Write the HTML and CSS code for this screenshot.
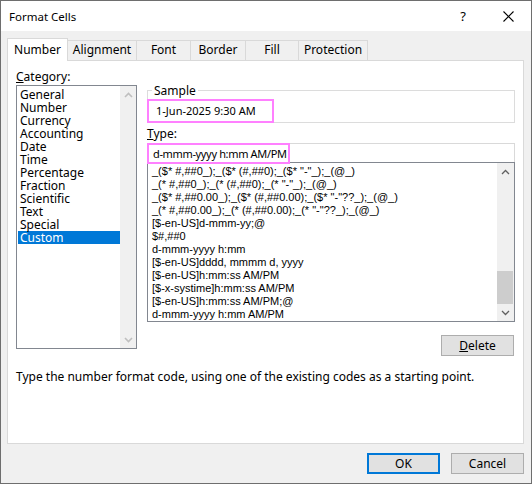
FILE: index.html
```html
<!DOCTYPE html>
<html>
<head>
<meta charset="utf-8">
<link rel="stylesheet" href="styles.css">
</head>
<body>
<div class="window">
  <div class="titlebar">
    <span class="title">Format Cells</span>
    <span class="help">?</span>
    <span class="close"><svg width="11" height="11" viewBox="0 0 11 11"><path d="M0.5 0.5L10.5 10.5M10.5 0.5L0.5 10.5" stroke="#000" stroke-width="1.1" fill="none"/></svg></span>
  </div>
  <div class="body">
    <div class="tabs">
      <div class="tab active t-number">Number</div>
      <div class="tab t-align">Alignment</div>
      <div class="tab t-font">Font</div>
      <div class="tab t-border">Border</div>
      <div class="tab t-fill">Fill</div>
      <div class="tab t-prot">Protection</div>
    </div>
    <div class="panel">
      <div class="cols">
        <div class="left">
          <div class="label cat-label"><u>C</u>ategory:</div>
          <div class="catlist">
            <div class="catitems">
              <div class="cat">General</div>
              <div class="cat">Number</div>
              <div class="cat">Currency</div>
              <div class="cat">Accounting</div>
              <div class="cat">Date</div>
              <div class="cat">Time</div>
              <div class="cat">Percentage</div>
              <div class="cat">Fraction</div>
              <div class="cat">Scientific</div>
              <div class="cat">Text</div>
              <div class="cat">Special</div>
              <div class="cat selected">Custom</div>
            </div>
            <div class="vscroll disabled">
              <div class="arrow"><svg width="9" height="6" viewBox="0 0 9 6"><path d="M1 5L4.5 1.5L8 5" stroke="currentColor" stroke-width="1.6" fill="none"/></svg></div>
              <div class="track"></div>
              <div class="arrow"><svg width="9" height="6" viewBox="0 0 9 6"><path d="M1 1L4.5 4.5L8 1" stroke="currentColor" stroke-width="1.6" fill="none"/></svg></div>
            </div>
          </div>
        </div>
        <div class="right">
          <fieldset class="sample">
            <legend>Sample</legend>
            <div class="hl sample-val">1-Jun-2025 9:30 AM</div>
          </fieldset>
          <div class="label type-label"><u>T</u>ype:</div>
          <div class="typeinput"><span class="hl type-val">d-mmm-yyyy h:mm AM/PM</span></div>
          <div class="fmtlist">
            <div class="fmtitems">
              <div class="fmt">_($* #,##0_);_($* (#,##0);_($* "-"_);_(@_)</div>
              <div class="fmt">_(* #,##0_);_(* (#,##0);_(* "-"_);_(@_)</div>
              <div class="fmt">_($* #,##0.00_);_($* (#,##0.00);_($* "-"??_);_(@_)</div>
              <div class="fmt">_(* #,##0.00_);_(* (#,##0.00);_(* "-"??_);_(@_)</div>
              <div class="fmt">[$-en-US]d-mmm-yy;@</div>
              <div class="fmt">$#,##0</div>
              <div class="fmt">d-mmm-yyyy h:mm</div>
              <div class="fmt">[$-en-US]dddd, mmmm d, yyyy</div>
              <div class="fmt">[$-en-US]h:mm:ss AM/PM</div>
              <div class="fmt">[$-x-systime]h:mm:ss AM/PM</div>
              <div class="fmt">[$-en-US]h:mm:ss AM/PM;@</div>
              <div class="fmt">d-mmm-yyyy h:mm AM/PM</div>
            </div>
            <div class="vscroll active-sb">
              <div class="arrow"><svg width="9" height="6" viewBox="0 0 9 6"><path d="M1 5L4.5 1.5L8 5" stroke="currentColor" stroke-width="1.3" fill="none"/></svg></div>
              <div class="track"><div class="thumb"></div></div>
              <div class="arrow"><svg width="9" height="6" viewBox="0 0 9 6"><path d="M1 1L4.5 4.5L8 1" stroke="currentColor" stroke-width="1.3" fill="none"/></svg></div>
            </div>
          </div>
          <div class="delrow"><button class="btn"><u>D</u>elete</button></div>
        </div>
      </div>
      <p class="hint">Type the number format code, using one of the existing codes as a starting point.</p>
    </div>
    <div class="footer">
      <button class="btn ok">OK</button>
      <button class="btn">Cancel</button>
    </div>
  </div>
</div>
</body>
</html>
```
FILE: styles.css
```css
* { box-sizing: border-box; }
html, body { margin: 0; padding: 0; }
body {
  width: 532px; height: 484px; overflow: hidden;
  font-family: "Noto Sans", "Open Sans", sans-serif;
  font-size: 12px; color: #000;
}
.window {
  width: 532px; height: 484px;
  border: 1px solid #6e6e6e;
  background: #f0f0f0;
  display: flex; flex-direction: column;
}
.titlebar {
  height: 30px; background: #fff;
  display: flex; align-items: center;
  padding-left: 8px;
}
.title { flex: 1; font-size: 11.5px; }
.help { width: 20px; text-align: center; margin-right: 30px; font-size: 13px; }
.close { width: 11px; margin-right: 17px; display: flex; align-items: center; }
.body { padding: 7px 7px 0 6px; display: flex; flex-direction: column; }
.tabs { display: flex; align-items: flex-end; height: 22px; }
.tab {
  height: 20px; line-height: 18px;
  border: 1px solid #d9d9d9; border-bottom: none;
  background: #f0f0f0;
  padding: 0; margin-left: -1px;
  text-align: center;
}
.tab.active {
  height: 23px; margin-bottom: -1px; margin-left: 0;
  background: #fff; position: relative; z-index: 1;
  line-height: 22px;
}
.t-number { width: 61px; }
.t-align { width: 70px; }
.t-font { width: 55px; }
.t-border { width: 56px; }
.t-fill { width: 54px; }
.t-prot { width: 70px; }
.panel {
  height: 384px;
  background: #fff;
  border: 1px solid #d9d9d9;
  padding: 7px 7px 0 8px;
}
.cols { display: flex; gap: 10px; }
.left { width: 121px; }
.right { width: 368px; display: flex; flex-direction: column; }
.label { line-height: 17px; height: 17px; }
.catlist {
  height: 264px;
  border: 1px solid #828790;
  display: flex;
  padding: 1px 0 1px 1px;
}
.catitems { flex: 1; padding-top: 1px; }
.cat { height: 13px; line-height: 13px; padding-left: 2px; }
.cat.selected { background: #0078d7; color: #fff; }
.vscroll {
  width: 16px; background: #f0f0f0;
  display: flex; flex-direction: column;
}
.vscroll .arrow { height: 17px; display: flex; align-items: center; justify-content: center; }
.vscroll .track { flex: 1; display: flex; flex-direction: column; justify-content: flex-end; }
.vscroll.disabled { color: #bfbfbf; margin: -1px 0; }
.vscroll.active-sb { color: #606060; width: 17px; }
.thumb { height: 33px; background: #cdcdcd; margin: 0 1px 0 0; }
.sample {
  margin: 15px 0 0 0; padding: 0;
  border: 1px solid #dcdcdc;
  min-width: 0;
}
.sample legend { padding: 0 2px; margin-left: 4px; line-height: 15px; }
.hl { border: 2px solid #ff80ff; display: inline-block; }
.sample-val {
  margin: 1px 0 -1px -1px;
  height: 24px; line-height: 20px;
  padding: 0 0 0 7px; width: 127px;
  font-size: 11px;
}
.type-label { margin-top: 3px; line-height: 15px; height: 15px; margin-bottom: 2px; }
.typeinput {
  height: 19px;
  border: 1px solid #d9d9d9; border-bottom: none;
  display: flex;
}
.type-val {
  margin: -1px 0 -1px -1px;
  height: 21px; line-height: 17px;
  width: 143px;
  padding: 0 0 0 4px;
  font-size: 11px; letter-spacing: -0.35px;
  white-space: nowrap;
  position: relative; z-index: 1;
}
.fmtlist {
  height: 160px;
  border: 1px solid #828790;
  display: flex;
}
.fmtitems {
  flex: 1; padding: 2px 0 0 4px; overflow: hidden;
  font-family: "Liberation Sans", Arial, sans-serif;
  font-size: 11px;
}
.fmt { height: 13px; line-height: 13px; white-space: nowrap; }
.delrow { display: flex; justify-content: flex-end; margin-top: 13px; padding-right: 1px; }
.btn {
  font-family: inherit; font-size: 12px; color: #000;
  width: 73px; height: 21px;
  background: #e1e1e1; border: 1px solid #adadad;
  padding: 0; margin: 0;
}
.btn.ok { border: 2px solid #0078d7; }
.hint { margin: 13px 0 0 0; line-height: 15px; }
.footer { display: flex; justify-content: flex-end; gap: 11px; margin-top: 9px; }
```
